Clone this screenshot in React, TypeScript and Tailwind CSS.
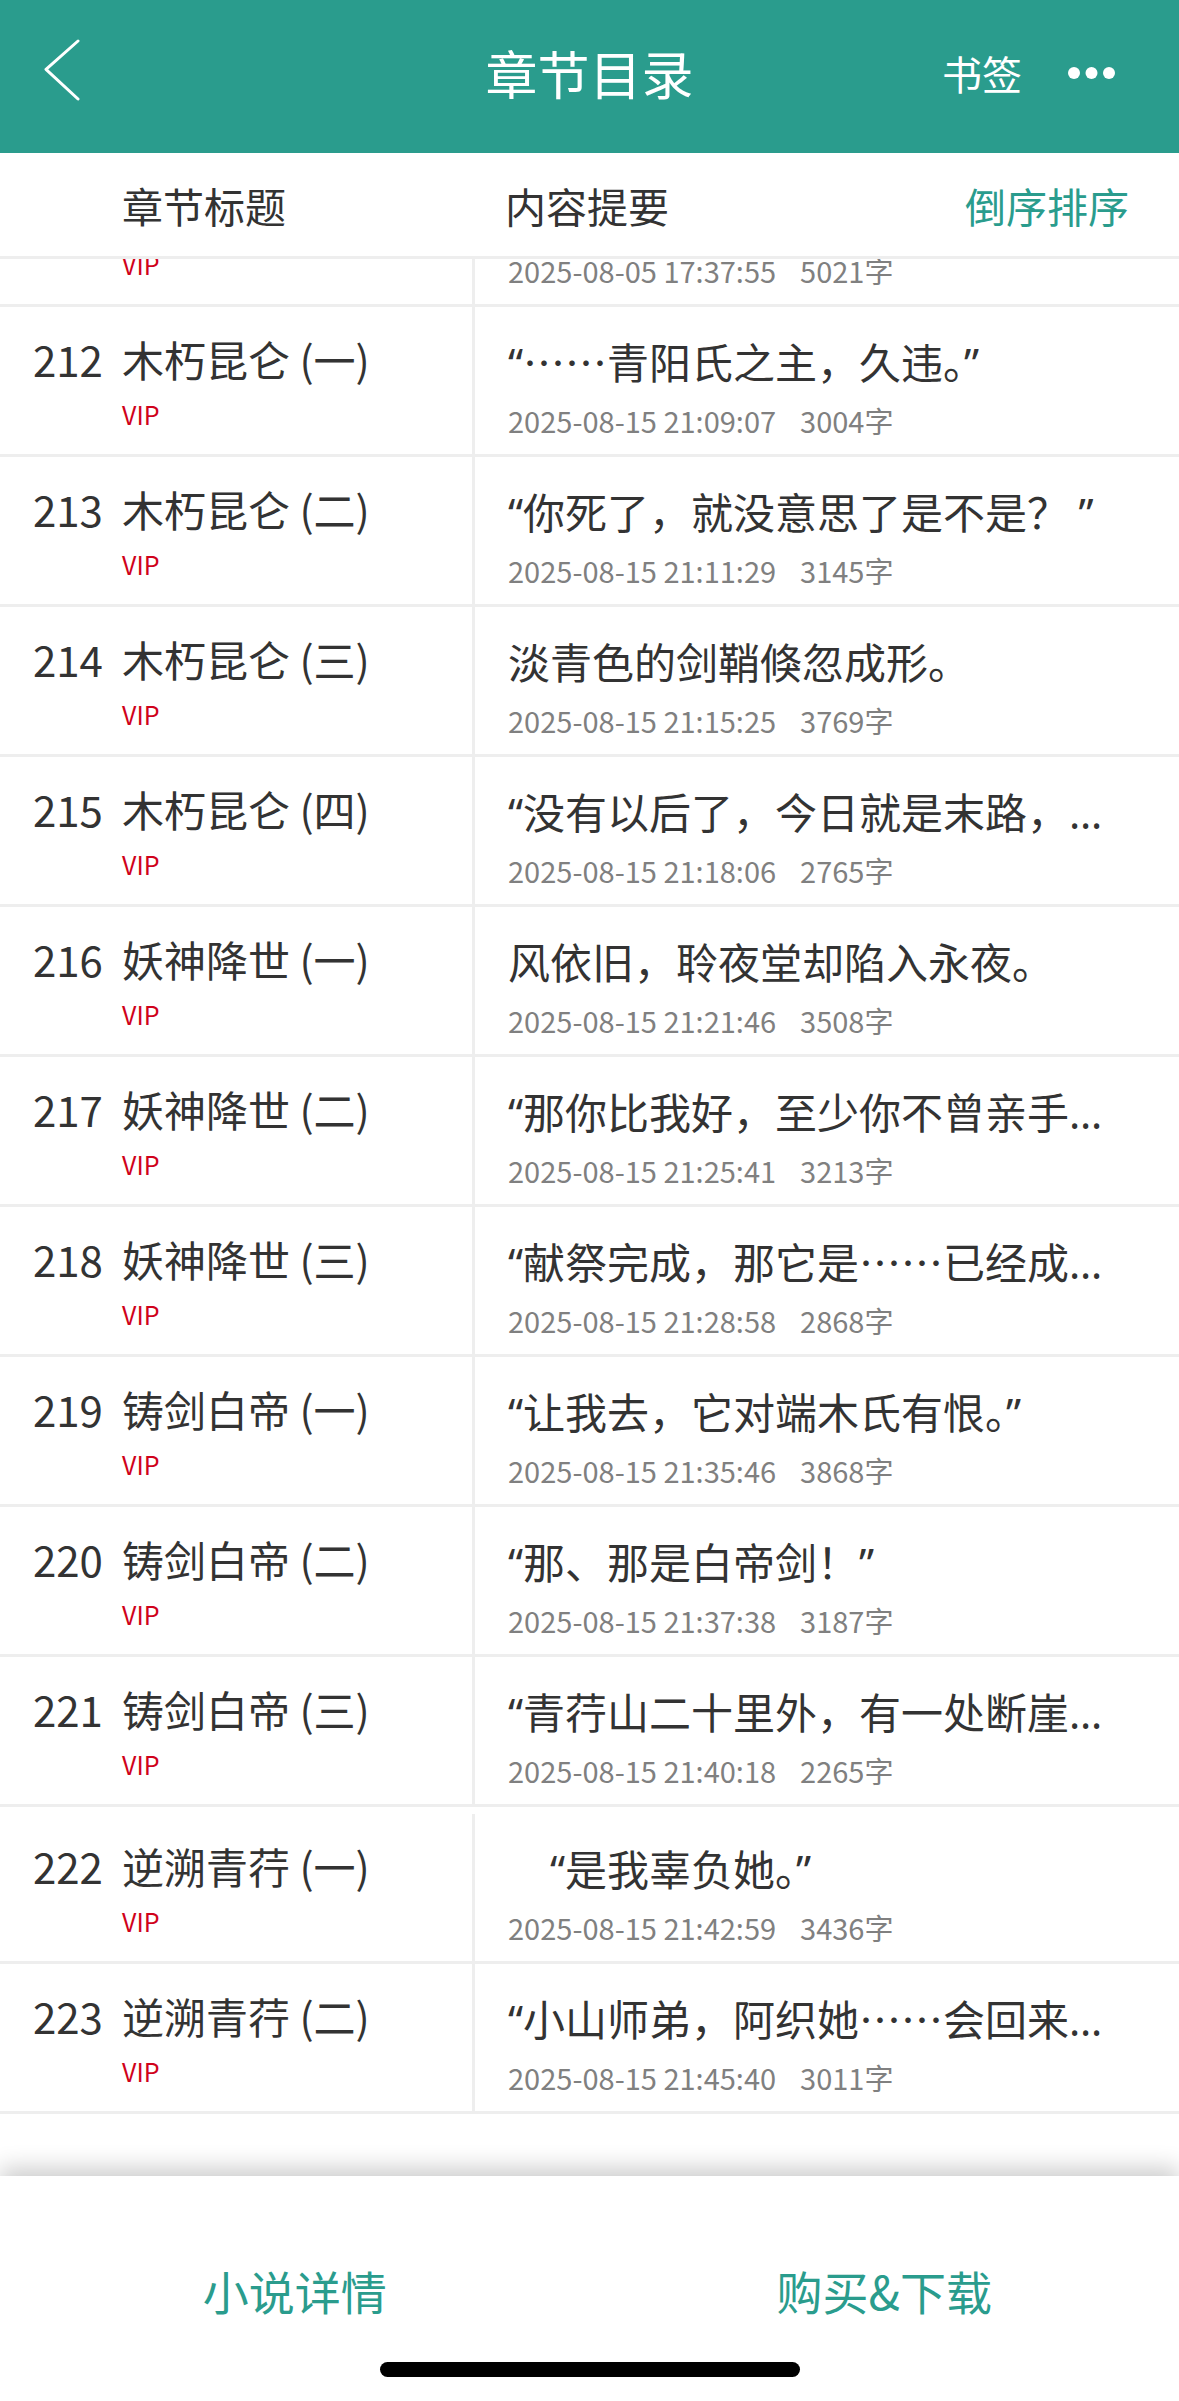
type Chapter = {
  no: number;
  title: string;
  summary: string;
  cut?: boolean;
  time: string;
  words: string;
  tall?: boolean;
};

const chapters: Chapter[] = [
  { no: 211, title: "", summary: "", time: "2025-08-05 17:37:55", words: "5021字" },
  { no: 212, title: "木朽昆仑 (一)", summary: "“……青阳氏之主，久违。”", time: "2025-08-15 21:09:07", words: "3004字" },
  { no: 213, title: "木朽昆仑 (二)", summary: "“你死了，就没意思了是不是？ ”", time: "2025-08-15 21:11:29", words: "3145字" },
  { no: 214, title: "木朽昆仑 (三)", summary: "淡青色的剑鞘倏忽成形。", time: "2025-08-15 21:15:25", words: "3769字" },
  { no: 215, title: "木朽昆仑 (四)", summary: "“没有以后了，今日就是末路，", cut: true, time: "2025-08-15 21:18:06", words: "2765字" },
  { no: 216, title: "妖神降世 (一)", summary: "风依旧，聆夜堂却陷入永夜。", time: "2025-08-15 21:21:46", words: "3508字" },
  { no: 217, title: "妖神降世 (二)", summary: "“那你比我好，至少你不曾亲手", cut: true, time: "2025-08-15 21:25:41", words: "3213字" },
  { no: 218, title: "妖神降世 (三)", summary: "“献祭完成，那它是……已经成", cut: true, time: "2025-08-15 21:28:58", words: "2868字" },
  { no: 219, title: "铸剑白帝 (一)", summary: "“让我去，它对端木氏有恨。”", time: "2025-08-15 21:35:46", words: "3868字" },
  { no: 220, title: "铸剑白帝 (二)", summary: "“那、那是白帝剑！”", time: "2025-08-15 21:37:38", words: "3187字" },
  { no: 221, title: "铸剑白帝 (三)", summary: "“青荇山二十里外，有一处断崖", cut: true, time: "2025-08-15 21:40:18", words: "2265字" },
  { no: 222, title: "逆溯青荇 (一)", summary: "\u3000“是我辜负她。”", time: "2025-08-15 21:42:59", words: "3436字", tall: true },
  { no: 223, title: "逆溯青荇 (二)", summary: "“小山师弟，阿织她……会回来", cut: true, time: "2025-08-15 21:45:40", words: "3011字" },
];

// curly quotes in a latin face so they stay narrow like the app's font
function Summary({ text, cut }: { text: string; cut?: boolean }) {
  const parts = text.split(/([“”])/);
  return (
    <>
      {parts.map((p, i) =>
        p === "“" || p === "”" ? (
          <span key={i} className="font-['Noto_Sans',sans-serif]">
            {p}
          </span>
        ) : (
          p
        ),
      )}
      {cut && <span className="font-['Noto_Sans',sans-serif]">…</span>}
    </>
  );
}

function ChapterRow({ chapter }: { chapter: Chapter }) {
  return (
    <div
      className={`flex border-b-[3px] border-[#eeeeee] ${chapter.tall ? "h-[157px] pt-[7px]" : "h-[150px]"}`}
    >
      <div className="flex w-[472px] shrink-0 pl-[33px] pt-[26px] text-[#333333]">
        <span className="w-[89px] shrink-0 text-[42px] leading-[52px]">{chapter.no}</span>
        <div className="flex flex-col">
          <span className="h-[52px] whitespace-nowrap text-[42px] leading-[52px]">{chapter.title}</span>
          <span className="mt-[14px] text-[25px] leading-[30px] text-[#d0021b]">VIP</span>
        </div>
      </div>
      <div className="min-w-0 flex-1 border-l-[3px] border-[#eeeeee] pl-[33px] pr-[40px] pt-[28px]">
        <p className="h-[52px] overflow-hidden whitespace-nowrap text-[42px] leading-[52px] text-[#333333]">
          <Summary text={chapter.summary} cut={chapter.cut} />
        </p>
        <p className="mt-[16px] whitespace-nowrap text-[29px] leading-[34px] text-[#808080]">
          {chapter.time}
          <span className="ml-[24px]">{chapter.words}</span>
        </p>
      </div>
    </div>
  );
}

export default function App() {
  return (
    <div className="flex h-[2401px] w-[1179px] flex-col overflow-hidden bg-white font-['Noto_Sans_CJK_SC',sans-serif]">
      {/* top bar */}
      <header className="h-[153px] shrink-0 bg-[#2a9c8d]">
        <div className="grid h-[146px] grid-cols-[1fr_auto_1fr] items-center text-white">
          <div className="flex items-center">
            <svg className="ml-[40px]" width="40" height="70" viewBox="0 0 40 70" fill="none">
              <polyline
                points="38,3 6,31.3 38,61"
                stroke="white"
                strokeWidth="3"
                strokeLinecap="round"
                strokeLinejoin="round"
              />
            </svg>
          </div>
          <h1 className="text-[52px] leading-[64px]">章节目录</h1>
          <div className="flex items-center justify-end pr-[63px]">
            <span className="text-[40px] leading-[50px]">书签</span>
            <svg className="ml-[46px]" width="48" height="14" viewBox="0 0 48 14">
              <circle cx="6" cy="7" r="6" fill="white" />
              <circle cx="23.5" cy="7" r="6" fill="white" />
              <circle cx="41" cy="7" r="6" fill="white" />
            </svg>
          </div>
        </div>
      </header>

      {/* column heads */}
      <div className="flex h-[106px] shrink-0 items-center border-b-[3px] border-[#eeeeee] text-[41px] leading-[52px]">
        <span className="w-[505px] shrink-0 pl-[122px] text-[#333333]">章节标题</span>
        <span className="flex-1 text-[#333333]">内容提要</span>
        <span className="pr-[50px] text-[#2a9c8d]">倒序排序</span>
      </div>

      {/* chapter list, scrolled */}
      <div className="min-h-0 flex-1 overflow-hidden">
        <div className="-mt-[102px]">
          {chapters.map((c) => (
            <ChapterRow key={c.no} chapter={c} />
          ))}
        </div>
      </div>

      {/* bottom bar */}
      <footer className="relative z-10 h-[225px] shrink-0 bg-white shadow-[0_-8px_22px_rgba(0,0,0,0.2)]">
        <div className="grid grid-cols-2 pt-[88px] text-[46px] leading-[52px] text-[#2a9c8d]">
          <span className="text-center">小说详情</span>
          <span className="text-center">购买&amp;下载</span>
        </div>
        <div className="mx-auto mt-[46px] h-[15px] w-[420px] rounded-full bg-black" />
      </footer>
    </div>
  );
}
